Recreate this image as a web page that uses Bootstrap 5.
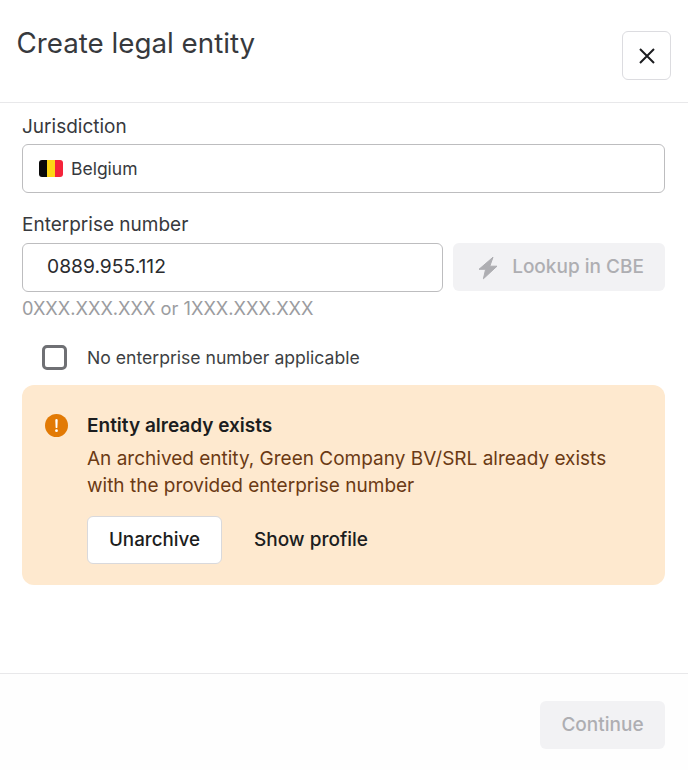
<!DOCTYPE html>
<html lang="en">
<head>
<meta charset="utf-8">
<title>Create legal entity</title>
<link rel="stylesheet" href="https://cdn.jsdelivr.net/npm/bootstrap@5.3.0/dist/css/bootstrap.min.css">
<style>
html,body{height:770px;overflow:hidden}
body{font-family:"Inter",sans-serif;background:#fff;color:#2f3033;font-size:19px;line-height:27px}
.dlg-head{height:103px;padding:0 17px 0 17px;border-bottom:1px solid #e8e8ea}
.dlg-title{font-size:27.75px;line-height:36px;font-weight:400;margin:25px 0 0 -.5px;color:#37393d}
.dlg-close{width:49px;height:49px;margin-top:31px;background:#fff;border:1px solid #dcdce0;border-radius:6px;padding:0}
.dlg-body{padding:10px 23px 0 22px;height:570px}
.fld-label{display:block;line-height:27px;margin:0 0 4px;color:#37393d}
.fld-label-next{margin-bottom:5px}
.fake-select{height:49px;border:1px solid #bdbdbf;border-radius:6px;padding:0 16px;color:#37393d;background:#fff;margin-bottom:18px;font-size:17.5px}
.flag{width:24px;height:17px;border-radius:3px;overflow:hidden;flex:none}
.flag i{flex:1}
.num-input{height:49px;border:1px solid #bdbdbf;border-radius:6px;padding:0 24px 3px;font-size:19.25px;color:#2a2b2e;box-shadow:none!important}
.num-wrap{width:421px;flex:none}
.field-row{gap:10px}
.btn.muted-btn:disabled{background:#f2f2f4;border:0;border-radius:6px;color:#aeaeb2;font-size:19px;font-weight:500;height:48px;opacity:1;padding:0}
.btn.lookup-btn:disabled{padding:1px 0 0 3px;gap:13px}
.hint{color:#9b9ca0;line-height:27px;margin-top:3px;font-size:18.25px}
.chk-row{margin:22px 0 0 20px;height:27px;color:#3d3f43;gap:20px;font-size:17.6px}
.chk-text{margin-top:-1px}
.chk-box{width:25px;height:25px;border:3px solid #6f7074;border-radius:5px;background:#fff;flex:none}
.warn-box{background:#fee9cf;border-radius:12px;margin-top:14px;height:200px;padding:27px 23px 0;gap:19px}
.warn-ico{width:23px;height:23px;flex:none;margin-top:2px}
.warn-title{font-weight:600;color:#1c1d20;line-height:27px}
.warn-text{color:#6b3a14;margin-top:6px}
.warn-btn{height:48px;width:135px;background:#fff;border:1px solid #d9d9dc;border-radius:6px;font-size:18.8px;font-weight:500;color:#1c1d20;padding:0 0 2px}
.link-act{background:none;border:0;font-size:19px;font-weight:500;color:#1c1d20;padding:0 0 2px;margin-left:32px}
.warn-actions{margin-top:17px}
.dlg-foot{height:97px;border-top:1px solid #e8e8ea;background:#fefefe;padding:27px 23px 0 0}
.btn.cont-btn:disabled{width:125px}
</style>
</head>
<body>
<div class="dlg-head d-flex justify-content-between align-items-start">
  <h1 class="dlg-title">Create legal entity</h1>
  <button type="button" class="dlg-close d-flex align-items-center justify-content-center" aria-label="Close">
    <svg width="18" height="18" viewBox="0 0 18 18" fill="none" stroke="#1c1d20" stroke-width="2"><path d="M2 2 16 16M16 2 2 16"/></svg>
  </button>
</div>
<div class="dlg-body">
  <label class="fld-label">Jurisdiction</label>
  <div class="fake-select d-flex align-items-center gap-2">
    <span class="flag d-flex"><i style="background:#0a0a0a"></i><i style="background:#fdd716"></i><i style="background:#f5233a"></i></span>
    <span>Belgium</span>
  </div>
  <label class="fld-label fld-label-next">Enterprise number</label>
  <div class="d-flex field-row">
    <div class="num-wrap"><input class="form-control num-input" value="0889.955.112"></div>
    <button type="button" class="btn muted-btn lookup-btn d-flex flex-grow-1 align-items-center justify-content-center" disabled>
      <svg width="22" height="24" viewBox="0 0 22 24" fill="#aeaeb2" stroke="#aeaeb2" stroke-linejoin="round"><path d="M16 1.2 2 13.3h6.6L6.4 22.8 20 10.2h-7.2z"/></svg>
      <span>Lookup in CBE</span>
    </button>
  </div>
  <div class="hint">0XXX.XXX.XXX or 1XXX.XXX.XXX</div>
  <div class="chk-row d-flex align-items-center"><span class="chk-box"></span><span class="chk-text">No enterprise number applicable</span></div>
  <div class="warn-box d-flex">
    <svg class="warn-ico" viewBox="0 0 23 23"><circle cx="11.5" cy="11.5" r="11.5" fill="#e27a05"/><path d="M10.3 6.2a1.2 1.2 0 0 1 2.4 0l-.3 7a.9.9 0 0 1-1.8 0z" fill="#fff"/><circle cx="11.5" cy="16.7" r="1.4" fill="#fff"/></svg>
    <div class="flex-grow-1">
      <div class="warn-title">Entity already exists</div>
      <div class="warn-text">An archived entity, Green Company BV/SRL already exists<br>with the provided enterprise number</div>
      <div class="warn-actions d-flex align-items-center">
        <button type="button" class="warn-btn">Unarchive</button>
        <button type="button" class="link-act">Show profile</button>
      </div>
    </div>
  </div>
</div>
<div class="dlg-foot d-flex justify-content-end align-items-start">
  <button type="button" class="btn muted-btn cont-btn" disabled>Continue</button>
</div>
<script src="https://cdn.jsdelivr.net/npm/bootstrap@5.3.0/dist/js/bootstrap.bundle.min.js"></script>
</body>
</html>
